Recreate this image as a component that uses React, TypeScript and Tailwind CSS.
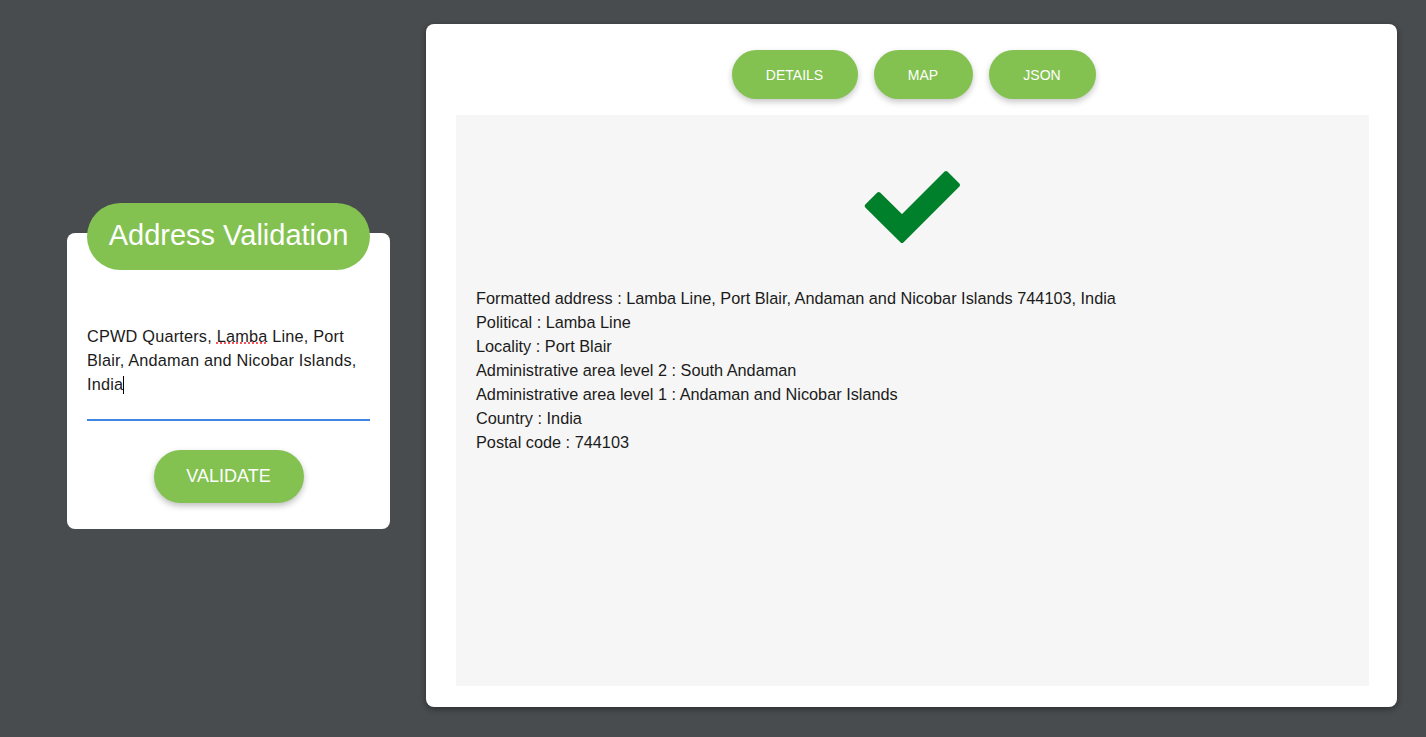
const details = [
  ['Formatted address', 'Lamba Line, Port Blair, Andaman and Nicobar Islands 744103, India'],
  ['Political', 'Lamba Line'],
  ['Locality', 'Port Blair'],
  ['Administrative area level 2', 'South Andaman'],
  ['Administrative area level 1', 'Andaman and Nicobar Islands'],
  ['Country', 'India'],
  ['Postal code', '744103'],
];

function CheckIcon() {
  return (
    <svg width="110" height="90" viewBox="0 0 110 90">
      <polygon
        points="8.7,46 20.7,34 44,57 88,13 100,25 44,81"
        fill="#00802a"
        stroke="#00802a"
        strokeWidth="4"
        strokeLinejoin="round"
      />
    </svg>
  );
}

export default function App() {
  return (
    <div
      className="min-h-screen w-full bg-[#484c4f] flex items-center pb-[6px]"
      style={{ fontFamily: '"Liberation Sans", Arial, sans-serif' }}
    >
      {/* left: input card */}
      <div className="ml-[67px] w-[323px] flex flex-col items-center">
        <div className="relative z-10 w-[283px] h-[67px] rounded-full bg-[#83c251] flex items-center justify-center">
          <span className="text-white text-[29px]">Address Validation</span>
        </div>
        <div className="-mt-[37px] w-full bg-white rounded-lg px-5 pt-[91px] pb-[26px]">
          <div className="text-[16.3px] leading-6 text-[#1b1b1b] tracking-[0.2px]">
            CPWD Quarters,{' '}
            <span className="underline decoration-dotted decoration-red-500">Lamba</span> Line, Port Blair,
            Andaman and Nicobar Islands, India
            <span className="inline-block w-px h-[18px] bg-black align-middle" />
          </div>
          <div className="mt-[23px] h-[2px] bg-[#3e86e0]" />
          <div className="mt-[29px] flex justify-center">
            <button className="w-[150px] h-[53px] rounded-full bg-[#83c251] text-white text-[18px] shadow-[0_3px_6px_rgba(0,0,0,0.25)]">
              VALIDATE
            </button>
          </div>
        </div>
      </div>

      {/* right: results card */}
      <div className="ml-[36px] w-[971px] h-[683px] bg-white rounded-lg shadow-[0_2px_6px_rgba(0,0,0,0.4)] pl-[30px] pr-[28px] pt-[26px] pb-[21px] flex flex-col">
        <div className="flex justify-center gap-4 pl-[2px]">
          <button className="w-[126px] h-[49px] pt-[2px] rounded-full bg-[#83c251] text-white text-[14px] shadow-[0_3px_6px_rgba(0,0,0,0.22)]">
            DETAILS
          </button>
          <button className="w-[99px] h-[49px] pt-[2px] rounded-full bg-[#83c251] text-white text-[14px] shadow-[0_3px_6px_rgba(0,0,0,0.22)]">
            MAP
          </button>
          <button className="w-[107px] h-[49px] pt-[2px] rounded-full bg-[#83c251] text-white text-[14px] shadow-[0_3px_6px_rgba(0,0,0,0.22)]">
            JSON
          </button>
        </div>
        <div className="mt-4 flex-1 bg-[#f6f6f6] px-5 pt-[45px]">
          <div className="flex justify-center">
            <CheckIcon />
          </div>
          <div className="mt-[36px] text-[16.3px] leading-6 text-[#1b1b1b]">
            {details.map(([k, v]) => (
              <div key={k}>
                {k} : {v}
              </div>
            ))}
          </div>
        </div>
      </div>
    </div>
  );
}
